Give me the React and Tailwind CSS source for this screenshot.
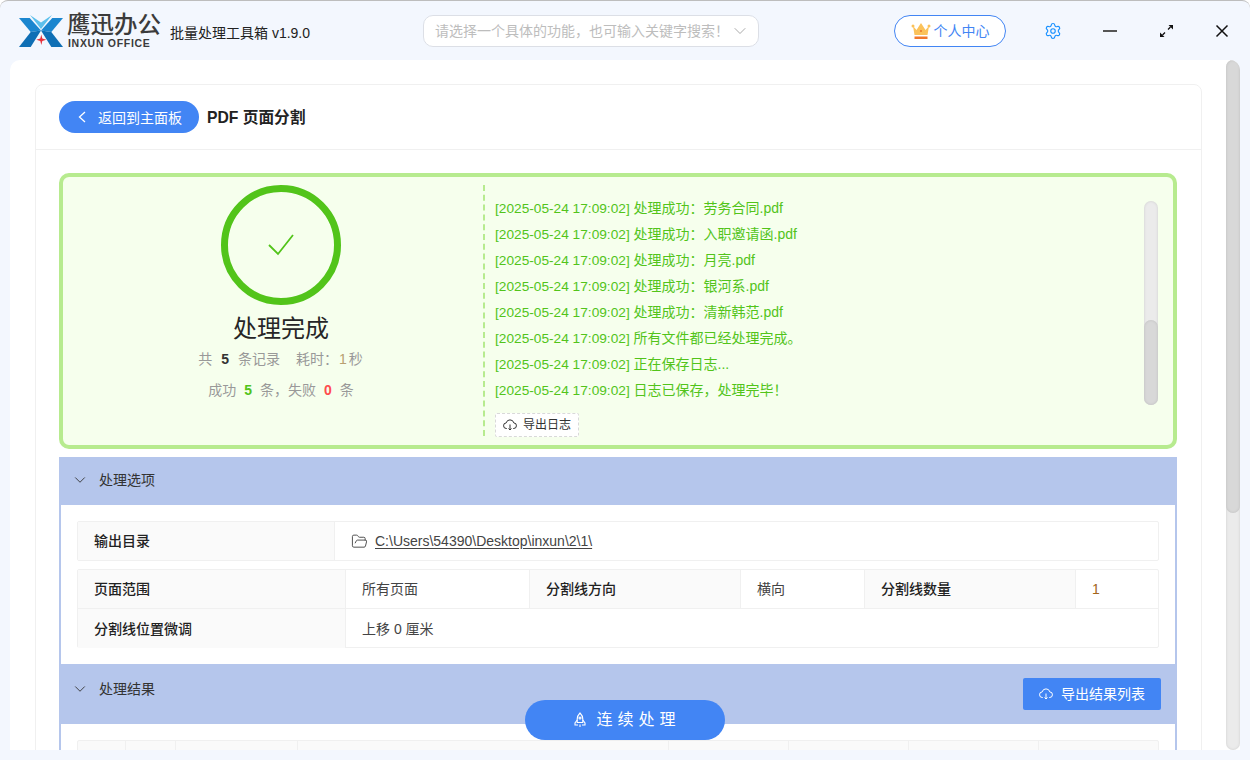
import React from 'react';
import { ChevronDown, FolderOpen, Settings } from 'lucide-react';

const logs = [
  '处理成功:劳务合同.pdf',
  '处理成功:入职邀请函.pdf',
  '处理成功:月亮.pdf',
  '处理成功:银河系.pdf',
  '处理成功:清新韩范.pdf',
  '所有文件都已经处理完成。',
  '正在保存日志...',
  '日志已保存,处理完毕!',
].map((line) => line.replace(':', '\uFF1A').replace(',', '\uFF0C').replace('!', '\uFF01'));

const searchHint = '请选择一个具体的功能\uFF0C也可输入关键字搜索\uFF01';

const resultCols = [48, 50, 122, 371, 120, 120, 130, 121];

const LogoMark = () => (
  <svg width="44" height="33" viewBox="0 0 44 33" className="shrink-0">
    <path d="M0 4h10.700L22 16.500 11.700 18z" fill="#1b86cf" />
    <path d="M11.700 18L22 16.500 11.700 33H0z" fill="#0f6fb5" />
    <path d="M44 4H33.300L22 16.500 32.300 18z" fill="#1b86cf" />
    <path d="M32.300 18L22 16.500 32.300 33H44z" fill="#0f6fb5" />
    <path d="M11 1l11 7.500L33 1 22 15z" fill="#5cc0ec" />
    <path d="M22.300 20.500l1 4 4 1.200-4 1.200-1 4-1-4-4-1.200 4-1.200z" fill="#e8313c" />
  </svg>
);

const CrownIcon = () => (
  <svg width="20" height="18" viewBox="0 0 20 18" className="shrink-0">
    <path d="M2 4l3.500 4L10 1l4.500 7L18 4l-1.500 9h-13z" fill="#fbc25a" />
    <circle cx="2" cy="4" r="1.500" fill="#fbc25a" />
    <circle cx="18" cy="4" r="1.500" fill="#fbc25a" />
    <circle cx="10" cy="9" r="1" fill="#e8742a" />
    <path d="M3.500 14.500h13V17h-13z" fill="#f0762b" />
  </svg>
);

const ExpandIcon = () => (
  <svg width="15" height="14" viewBox="0 0 15 14" fill="#111" stroke="#111" strokeWidth="1.300" className="shrink-0">
    <path d="M9 5.500l2.500-2.500M6 8.500L3.500 11" />
    <path d="M9.500 1H14v4.500z" stroke="none" />
    <path d="M1 8.500V13h4.500z" stroke="none" />
  </svg>
);

const CloseIcon = () => (
  <svg width="14" height="14" viewBox="0 0 14 14" fill="none" stroke="#111" strokeWidth="1.500" className="shrink-0">
    <path d="M1.500 1.500l11 11M12.500 1.500l-11 11" />
  </svg>
);

const CloudIcon = () => (
  <svg width="14" height="12" viewBox="0 0 14 12" fill="none" stroke="currentColor" strokeWidth="1" className="shrink-0">
    <path d="M4 9.500H3.500a2.800 2.800 0 0 1-.3-5.600 3.900 3.900 0 0 1 7.600 0 2.800 2.800 0 0 1-.3 5.600H10" />
    <path d="M7 5.500v5.500M5.500 9.500L7 11l1.500-1.500" />
  </svg>
);

const RocketIcon = () => (
  <svg width="12" height="16" viewBox="0 0 12 16" fill="none" stroke="#fff" strokeWidth="1.100" className="shrink-0">
    <path d="M6 1c2 2 2.800 4 2.800 6v3.500H3.200V7C3.200 5 4 3 6 1z" />
    <path d="M3.200 8L1 11v2h3M8.800 8L11 11v2H8M6 12.500V15" />
    <circle cx="6" cy="6" r="1" />
  </svg>
);

const Label = ({ children, className = '' }) => (
  <div className={`flex items-center pl-4 bg-[#fafafa] font-medium text-sm text-[#222] ${className}`}>{children}</div>
);

const Value = ({ children, className = '' }) => (
  <div className={`flex items-center pl-4 text-sm text-[#444] ${className}`}>{children}</div>
);

const SectionHeader = ({ title, titleHeight, className = '', children }) => (
  <div className={`flex justify-between bg-[#b5c6ec] ${className}`}>
    <div className={`flex items-center gap-[10px] pl-[12px] text-sm text-[#333] ${titleHeight}`}>
      <ChevronDown size={18} strokeWidth={1.200} />
      <span>{title}</span>
    </div>
    {children}
  </div>
);

const App = () => {
  return (
    <div lang="zh-CN" className="relative w-[1250px] h-[760px] overflow-hidden bg-[#f3f7fe] rounded-t-[8px] border-t border-[#bdbdbd] font-['Liberation_Sans','Noto_Sans_CJK_SC',sans-serif]">
      {/* title bar */}
      <div className="flex items-center h-[59px] pl-[19px]">
        <LogoMark />
        <div className="ml-[4px] flex flex-col w-[96px]">
          <span className="text-[23.500px] leading-[24px] font-medium text-[#3b3b3b] whitespace-nowrap">鹰迅办公</span>
          <span className="pl-[1px] text-[10.500px] leading-[12px] font-bold tracking-[0.7px] text-[#3b3b3b] whitespace-nowrap">INXUN OFFICE</span>
        </div>
        <span className="ml-[7px] mt-[4px] w-[137px] text-sm text-[#222] whitespace-nowrap">批量处理工具箱 v1.9.0</span>
        <div className="ml-[116px] flex items-center justify-between w-[336px] h-[32px] pl-[11px] pr-[8px] rounded-[10px] bg-white border border-[#dcdfe6]">
          <span className="text-sm text-[#bdbdbd] whitespace-nowrap">{searchHint}</span>
          <ChevronDown size={20} strokeWidth={1} className="shrink-0 text-[#999]" />
        </div>
        <div className="ml-[135px] flex items-center justify-center gap-[3px] w-[112px] h-[32px] rounded-full bg-white border border-[#4285f4] text-sm text-[#4285f4]">
          <CrownIcon />
          <span>个人中心</span>
        </div>
        <Settings size={18} strokeWidth={1.500} className="ml-[38px] shrink-0 text-[#1890ff]" />
        <div className="ml-[41px] w-[14px] h-[2px] shrink-0 bg-[#555]" />
        <div className="ml-[42px] flex items-center"><ExpandIcon /></div>
        <div className="ml-[41px] flex items-center"><CloseIcon /></div>
      </div>

      {/* main panel */}
      <div className="flex h-[690px] mx-[10px] bg-white rounded-t-[10px] overflow-hidden">
        <div className="flex-1 min-w-0 pl-[25px] pt-[24px] pr-[25px]">
          <div className="w-[1167px] h-[700px] rounded-t-[8px] border border-[#f0f0f0]">
            <div className="flex items-center h-[65px] pl-[23px] gap-[8px] border-b border-[#f0f0f0]">
              <div className="flex items-center w-[140px] h-[32px] pl-[19px] gap-[12px] rounded-full bg-[#4285f4] text-white text-sm">
                <svg width="8" height="12" viewBox="0 0 8 12" fill="none" stroke="#fff" strokeWidth="1.300" className="shrink-0">
                  <path d="M7 1L1.500 6 7 11" />
                </svg>
                <span className="mt-[1px]">返回到主面板</span>
              </div>
              <span className="mt-[1px] text-[15.700px] font-bold text-[#222]">PDF 页面分割</span>
            </div>

            <div className="pl-[23px] pt-[23px] w-[1142px]">
              {/* success box */}
              <div className="flex w-[1118px] h-[276px] pt-[8px] rounded-[10px] border-4 border-[#b7eb8f] bg-[#f6ffed]">
                <div className="flex flex-col items-center w-[420px] pl-[16px]">
                  <div className="flex items-center justify-center w-[120px] h-[120px] rounded-full border-[7px] border-[#52c41a]">
                    <svg width="28" height="24" viewBox="0 0 28 24" fill="none" stroke="#52c41a" strokeWidth="1.800">
                      <path d="M2 12l9 9L26 2" />
                    </svg>
                  </div>
                  <div className="mt-[6px] text-[24px] leading-[36px] text-[#262626]">处理完成</div>
                  <div className="mt-[3px] -ml-[1px] text-[14px] leading-[18px] text-[#999] whitespace-nowrap">
                    共<b className="mx-[9px] font-bold text-[#333]">5</b>条记录<span className="ml-[16px]">耗时{'\uFF1A'}</span><span className="ml-[1px] mr-[2px] text-[#b8a070]">1</span>秒
                  </div>
                  <div className="mt-[13px] text-[14px] leading-[18px] text-[#999] whitespace-nowrap">
                    成功<b className="mx-[8px] font-bold text-[#52c41a]">5</b>条{'\uFF0C'}失败<b className="mx-[8px] font-bold text-[#ff4d4f]">0</b>条
                  </div>
                </div>
                <div className="flex flex-1 h-[251px] pl-[10px] border-l-2 border-dashed border-[#b7eb8f]">
                  <div className="flex-1 pt-[10px]">
                    {logs.map((line, i) => (
                      <div key={i} className="h-[26px] leading-[26px] text-sm text-[#52c41a] whitespace-nowrap">
                        <span className="text-[13.700px]">[2025-05-24 17:09:02]</span> {line}
                      </div>
                    ))}
                    <div className="flex items-center gap-[6px] w-[84px] h-[24px] mt-[10px] pl-[7px] bg-white rounded-[2px] border border-dashed border-[#d9d9d9] text-[12px] text-[#333]">
                      <CloudIcon />
                      <span>导出日志</span>
                    </div>
                  </div>
                  <div className="flex flex-col justify-end w-[14px] h-[204px] mt-[16px] mr-[15px] rounded-[7px] bg-[#ebebeb] shadow-[inset_0_0_3px_rgba(0,0,0,0.12)]">
                    <div className="h-[85px] rounded-[7px] bg-[#d8d8d8] shadow-[inset_0_0_3px_rgba(0,0,0,0.12)]" />
                  </div>
                </div>
              </div>

              {/* options */}
              <SectionHeader title="处理选项" titleHeight="h-[46px]" className="mt-[8px] w-[1118px] h-[48px]" />
              <div className="w-[1118px] h-[159px] pt-[16px] pl-[16px] border-x-2 border-[#b5c6ec]">
                <div className="grid grid-cols-[257px_825px] w-[1082px] h-[40px] rounded-[2px] border border-[#f0f0f0]">
                  <Label className="border-r border-[#f0f0f0]">输出目录</Label>
                  <Value className="gap-[7px]">
                    <FolderOpen size={17} strokeWidth={1.300} />
                    <span className="underline underline-offset-2">C:\Users\54390\Desktop\inxun\2\1\</span>
                  </Value>
                </div>
                <div className="mt-[8px] w-[1082px] h-[79px] rounded-[2px] border border-[#f0f0f0]">
                  <div className="grid grid-cols-[268px_184px_211px_124px_211px_84px] h-[39px] border-b border-[#f0f0f0]">
                    <Label className="border-r border-[#f0f0f0]">页面范围</Label>
                    <Value className="border-r border-[#f0f0f0]">所有页面</Value>
                    <Label className="border-r border-[#f0f0f0]">分割线方向</Label>
                    <Value className="border-r border-[#f0f0f0]">横向</Value>
                    <Label className="border-r border-[#f0f0f0]">分割线数量</Label>
                    <Value><span className="text-[#a3651a]">1</span></Value>
                  </div>
                  <div className="grid grid-cols-[268px_814px] h-[39px]">
                    <Label className="border-r border-[#f0f0f0]">分割线位置微调</Label>
                    <Value>上移 0 厘米</Value>
                  </div>
                </div>
              </div>

              {/* results */}
              <SectionHeader title="处理结果" titleHeight="h-[50px]" className="w-[1118px] h-[60px]">
                <div className="flex items-center justify-center gap-[8px] w-[138px] h-[32px] mt-[14px] mr-[16px] rounded-[2px] bg-[#4285f4] text-white text-sm">
                  <CloudIcon />
                  <span>导出结果列表</span>
                </div>
              </SectionHeader>
              <div className="w-[1118px] h-[60px] pt-[16px] pl-[16px] border-x-2 border-[#b5c6ec]">
                <div className="flex w-[1082px] h-[40px] rounded-t-[2px] border border-[#f0f0f0] bg-[#fafafa]">
                  {resultCols.map((w, i) => (
                    <div key={i} style={{ width: w }} className="h-full shrink-0 border-r border-[#f0f0f0] last:border-r-0" />
                  ))}
                </div>
              </div>
            </div>
          </div>
        </div>
        <div className="w-[14px] h-full shrink-0 rounded-[7px] bg-[#ebebeb] shadow-[inset_0_0_3px_rgba(0,0,0,0.12)]">
          <div className="h-[453px] rounded-[7px] bg-[#d8d8d8] shadow-[inset_0_0_3px_rgba(0,0,0,0.12)]" />
        </div>
      </div>

      {/* floating button */}
      <div className="absolute left-[525px] top-[699px] flex items-center justify-center gap-[10px] w-[200px] h-[40px] pl-[5px] rounded-full bg-[#4285f4] text-white text-base tracking-[5px]">
        <RocketIcon />
        <span>连续处理</span>
      </div>
    </div>
  );
};

export default App;
